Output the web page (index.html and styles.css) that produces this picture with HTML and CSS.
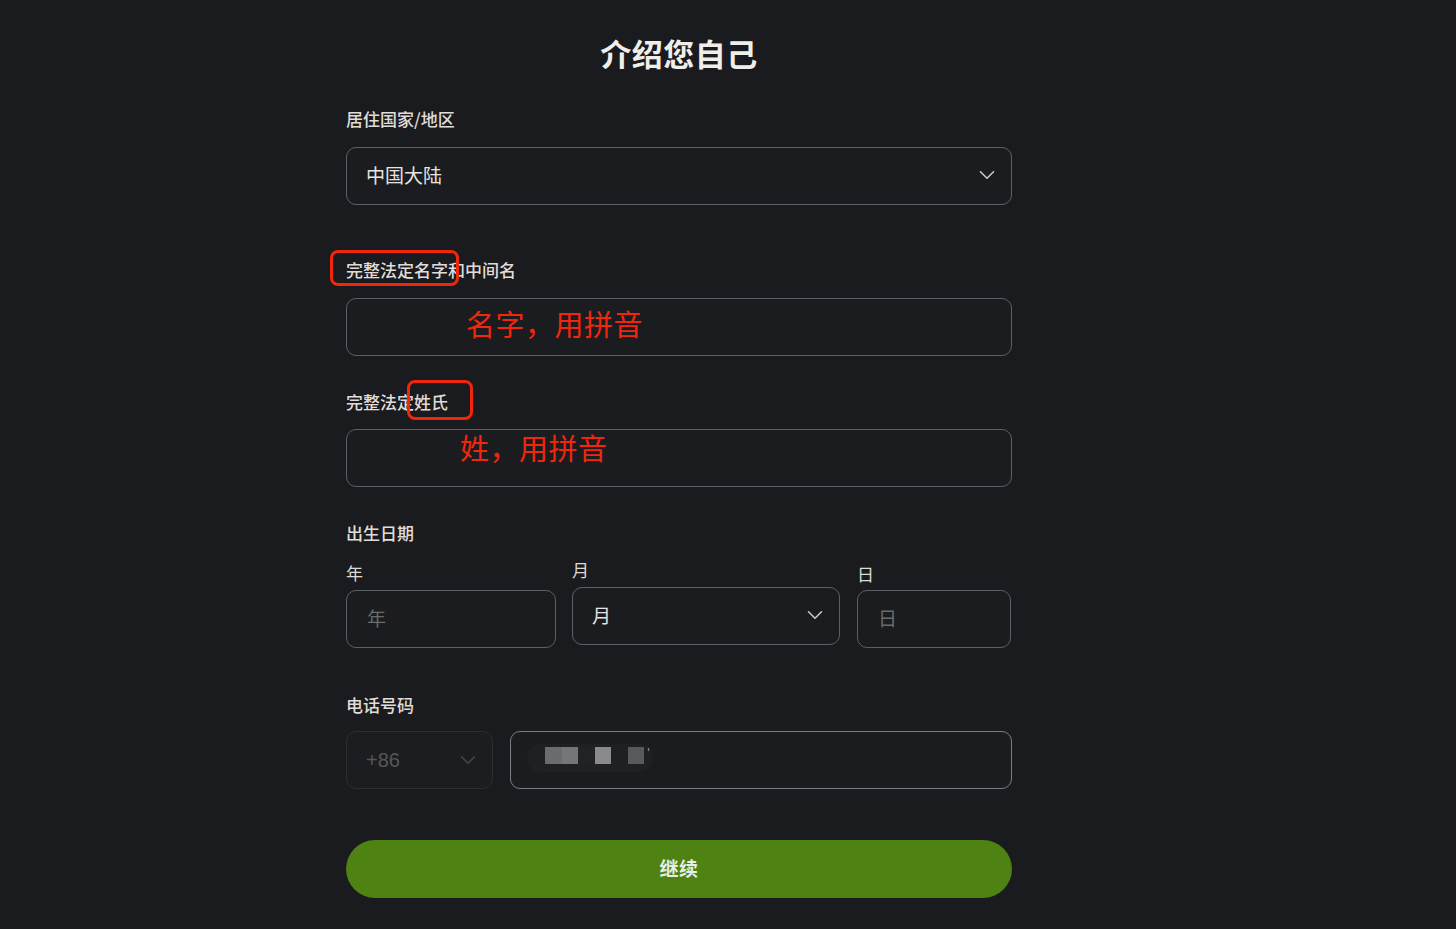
FILE: index.html
```html
<!DOCTYPE html>
<html lang="zh-CN">
<head>
<meta charset="utf-8">
<title>介绍您自己</title>
<link rel="stylesheet" href="styles.css">
</head>
<body>
<main class="page">
  <h1 class="title">介绍您自己</h1>

  <div class="label lbl-country">居住国家/地区</div>
  <div class="box select">
    <span class="value">中国大陆</span>
    <svg class="chev" width="16" height="10" viewBox="0 0 16 10"><path d="M1.5 1.8 L8 8.2 L14.5 1.8" fill="none" stroke="#c9c9c9" stroke-width="1.6" stroke-linecap="round" stroke-linejoin="round"/></svg>
  </div>

  <div class="label lbl-first">完整法定名字和中间名<span class="mark mark-first"></span></div>
  <div class="box input">
    <span class="note note-first">名字，用拼音</span>
  </div>

  <div class="label lbl-last">完整法定姓氏<span class="mark mark-last"></span></div>
  <div class="box input">
    <span class="note note-last">姓，用拼音</span>
  </div>

  <div class="label lbl-birth">出生日期</div>
  <div class="date-row">
    <div class="date-col col-year">
      <div class="sublabel">年</div>
      <div class="box input"><span class="placeholder">年</span></div>
    </div>
    <div class="date-col col-month">
      <div class="sublabel">月</div>
      <div class="box select">
        <span class="value">月</span>
        <svg class="chev" width="16" height="10" viewBox="0 0 16 10"><path d="M1.5 1.8 L8 8.2 L14.5 1.8" fill="none" stroke="#c9c9c9" stroke-width="1.6" stroke-linecap="round" stroke-linejoin="round"/></svg>
      </div>
    </div>
    <div class="date-col col-day">
      <div class="sublabel">日</div>
      <div class="box input"><span class="placeholder">日</span></div>
    </div>
  </div>

  <div class="label lbl-phone">电话号码</div>
  <div class="phone-row">
    <div class="box code">
      <span class="code-val">+86</span>
      <svg class="chev" width="16" height="10" viewBox="0 0 16 10"><path d="M1.5 1.8 L8 8.2 L14.5 1.8" fill="none" stroke="#45474a" stroke-width="1.5" stroke-linecap="round" stroke-linejoin="round"/></svg>
    </div>
    <div class="box phone">
      <div class="blur">
        <span class="px p1"></span><span class="px p2"></span><span class="px p3"></span><span class="px p4"></span><span class="px p5"></span><span class="px p6"></span><span class="tick">'</span>
      </div>
    </div>
  </div>

  <button class="continue" type="button">继续</button>
</main>
</body>
</html>
```

FILE: styles.css
```css
* { box-sizing: border-box; }

html, body {
  margin: 0;
  padding: 0;
  background: #1a1b1e;
}

body {
  font-family: "Noto Sans CJK SC", "Noto Sans", "Liberation Sans", sans-serif;
  color: #e2e0dc;
}

.page {
  width: 666px;
  margin-left: 346px;
  padding-top: 33px;
  padding-bottom: 30px;
  display: flex;
  flex-direction: column;
}

.title {
  margin: 0;
  height: 40px;
  line-height: 40px;
  font-size: 31px;
  font-weight: 700;
  text-align: center;
  color: #f0eeea;
  letter-spacing: 0.5px;
}

.label {
  position: relative;
  height: 24px;
  line-height: 24px;
  font-size: 17px;
  font-weight: 500;
  color: #e0ddd8;
}

.lbl-country { margin-top: 34px; margin-bottom: 16px; }
.lbl-first { margin-top: 53px; margin-bottom: 16px; }
.lbl-last { margin-top: 34px; margin-bottom: 15px; }
.lbl-birth { margin-top: 34px; margin-bottom: 18px; }
.lbl-phone { margin-top: 45px; margin-bottom: 14px; }

.mark {
  position: absolute;
  border: 3.5px solid #f2260c;
  border-radius: 8px;
}
.mark-first { left: -16px; top: -8px; width: 129px; height: 36px; }
.mark-last { left: 61px; top: -10px; width: 66px; height: 40px; }

.box {
  position: relative;
  height: 58px;
  border: 1.5px solid #5c5f63;
  border-radius: 10px;
  background: #1b1c1f;
  display: flex;
  align-items: center;
  padding-bottom: 4px;
}

.select {
  justify-content: space-between;
  padding: 0 16px 4px 19px;
}

.value {
  font-size: 19px;
  color: #e6e4e0;
}

.chev { display: block; margin-top: 2px; }

.note {
  position: absolute;
  font-size: 29px;
  line-height: 36px;
  color: #f2260c;
  letter-spacing: 0.5px;
  white-space: nowrap;
}
.note-first { left: 119px; top: 6px; }
.note-last { left: 113px; top: -1px; }

.date-row {
  display: flex;
  align-items: flex-start;
}

.date-col { display: flex; flex-direction: column; }
.col-year { width: 210px; margin-right: 16px; }
.col-month { width: 268px; margin-right: 17px; margin-top: -3px; }
.col-day { width: 154px; margin-top: 1px; }

.sublabel {
  height: 20px;
  line-height: 20px;
  font-size: 17px;
  color: #dedbd6;
  margin-bottom: 7px;
}
.col-day .sublabel { margin-bottom: 6px; }

.input .placeholder {
  margin-left: 20px;
  font-size: 19px;
  color: #6a6b6b;
}

.phone-row {
  display: flex;
}

.code {
  width: 147px;
  margin-right: 17px;
  border-color: #2c2e31;
  background: #1c1d20;
  justify-content: space-between;
  padding: 0 16px 0 19px;
}

.code .chev { margin-top: 0; }

.code-val {
  font-family: "Liberation Sans", "Noto Sans", sans-serif;
  font-size: 20px;
  color: #55575a;
}

.phone {
  flex: 1;
  border-color: #7a7d81;
}

.blur {
  position: absolute;
  left: 16px;
  top: 12px;
  width: 126px;
  height: 28px;
  border-radius: 14px;
  background: #1e2023;
  display: flex;
  align-items: flex-start;
  padding-left: 18px;
  padding-top: 3px;
}

.px { display: block; height: 17px; }
.p1 { width: 17px; background: #6b6c6e; }
.p2 { width: 16px; background: #747677; }
.p3 { width: 17px; background: #1f2325; }
.p4 { width: 16px; background: #8a8a8b; }
.p5 { width: 17px; background: #1e2022; }
.p6 { width: 16px; background: #58595b; }
.tick { font-size: 11px; line-height: 12px; color: #999; margin-left: 3px; }

.continue {
  margin-top: 51px;
  height: 58px;
  width: 100%;
  border: none;
  border-radius: 29px;
  background: #4e8213;
  color: #e9eee2;
  font-family: "Noto Sans CJK SC", "Noto Sans", sans-serif;
  font-size: 19px;
  font-weight: 700;
  letter-spacing: 0.5px;
  padding: 0 0 4px 0;
}
```
